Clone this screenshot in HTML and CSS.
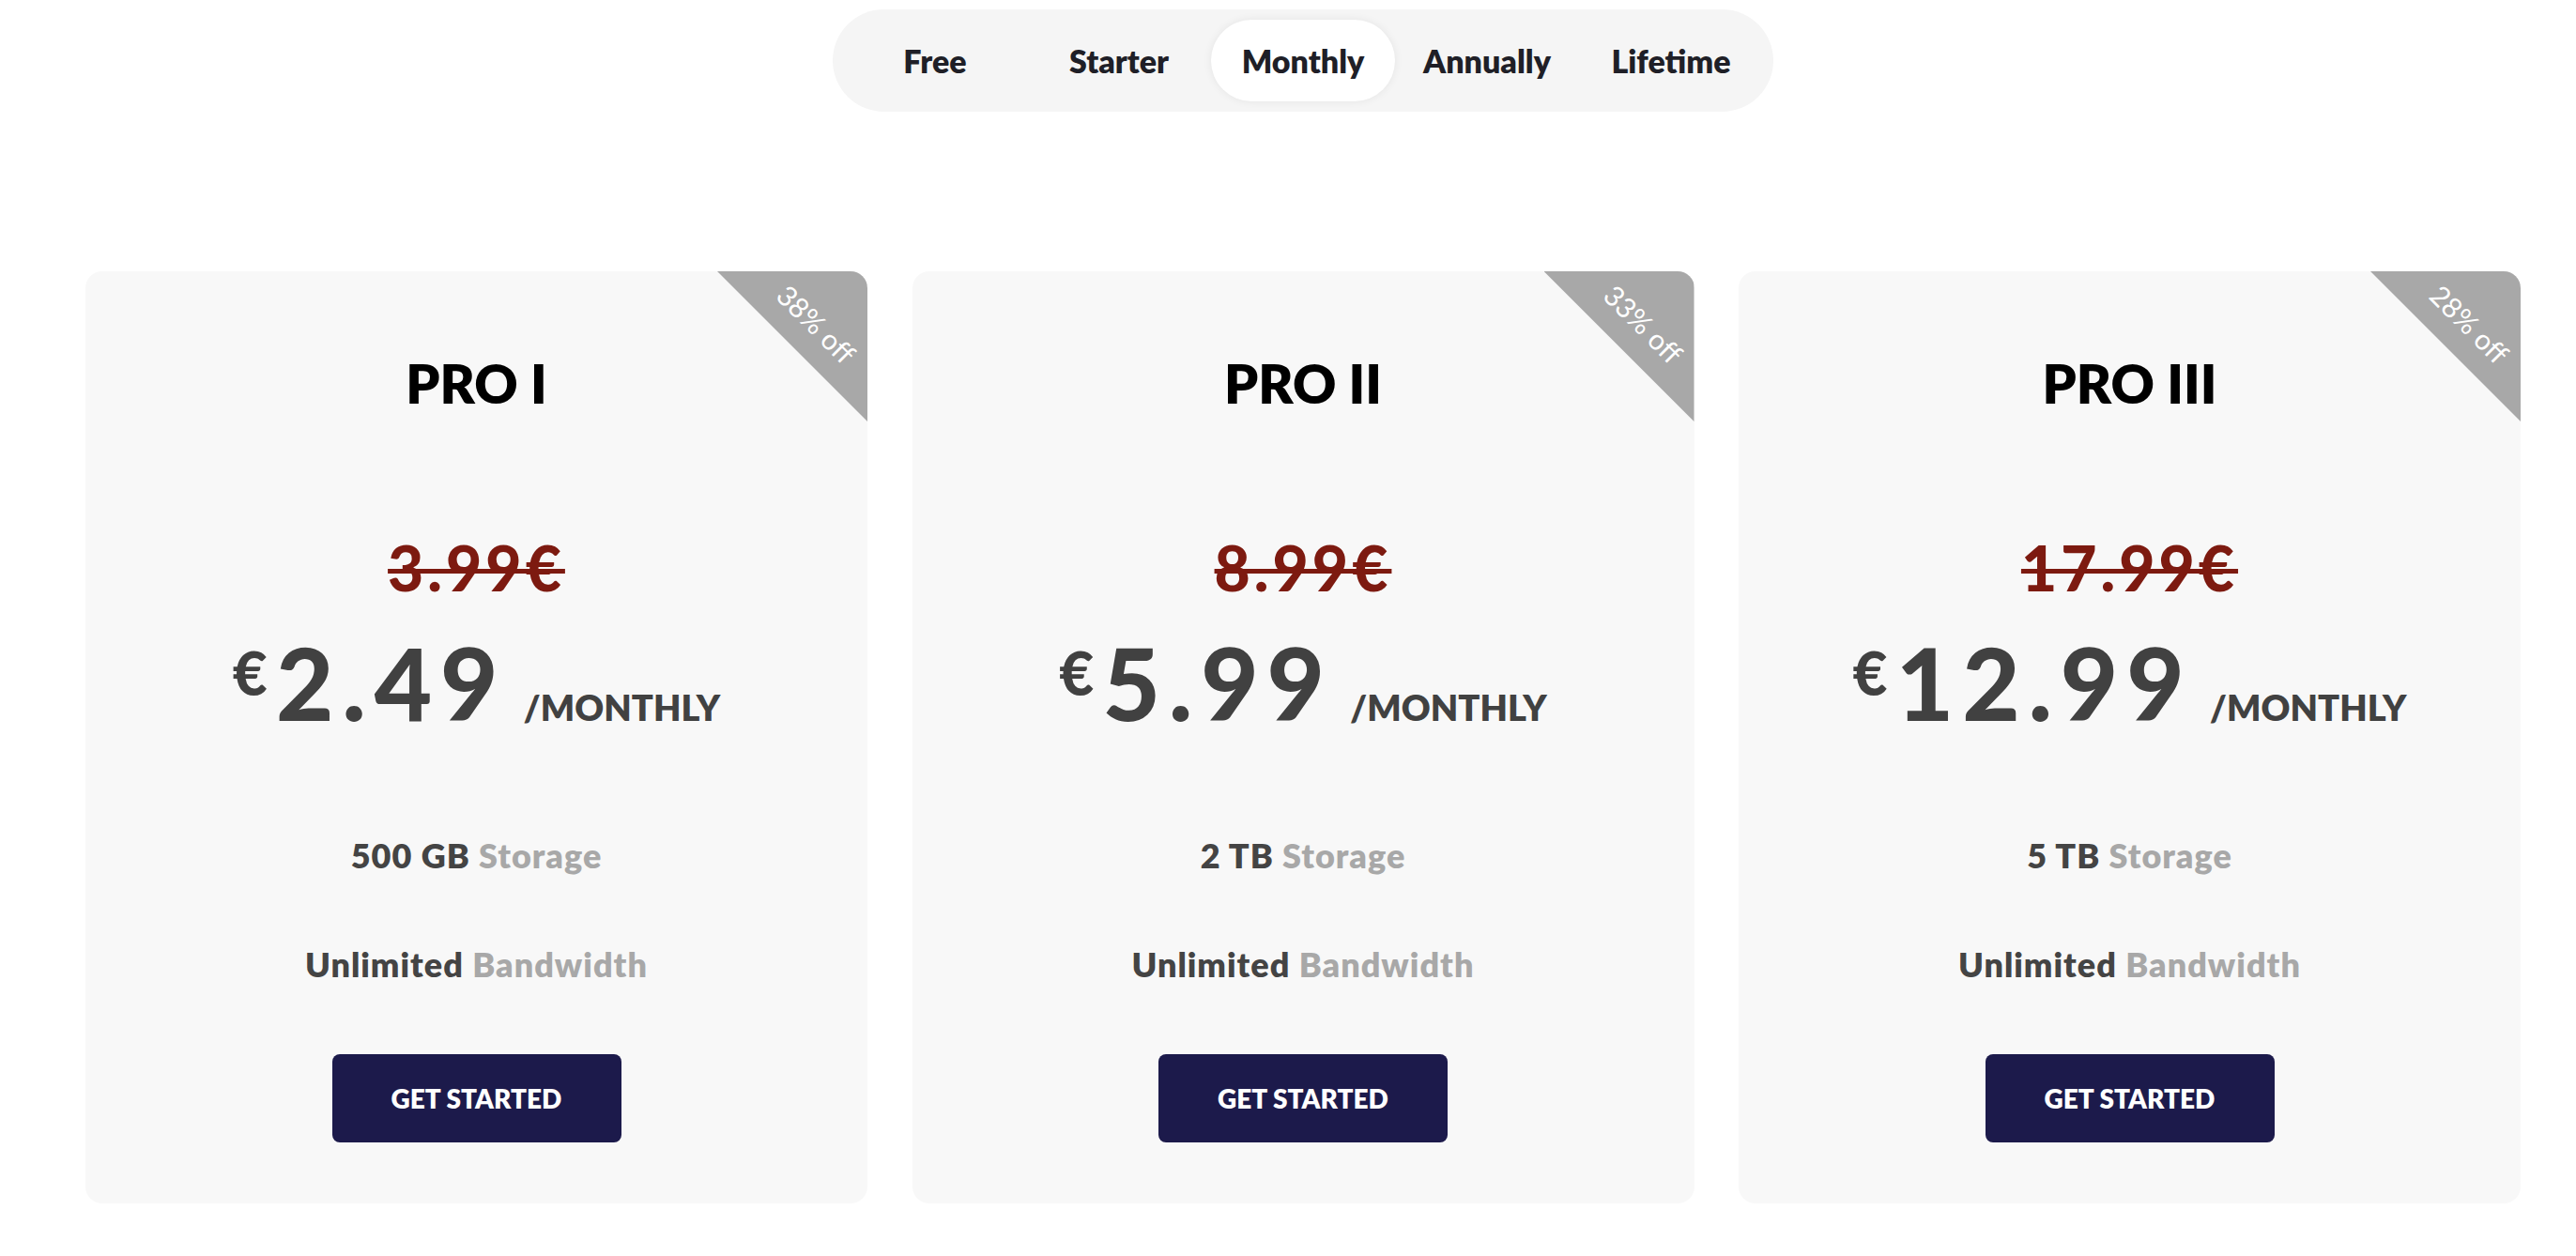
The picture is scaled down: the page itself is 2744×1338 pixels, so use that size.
FILE: index.html
```html
<!DOCTYPE html>
<html lang="en">
<head>
<meta charset="utf-8">
<title>Pricing</title>
<link rel="stylesheet" href="styles.css">
</head>
<body>
<div class="wrap">
  <nav class="tabs">
    <button class="tab">Free</button>
    <button class="tab">Starter</button>
    <button class="tab active">Monthly</button>
    <button class="tab">Annually</button>
    <button class="tab">Lifetime</button>
  </nav>

  <section class="cards">
    <article class="card">
      <div class="ribbon"><span>38% off</span></div>
      <h2 class="title">PRO I</h2>
      <div class="old">3.99€</div>
      <div class="price"><span class="cur">€</span><span class="amount">2.49</span><span class="per">/MONTHLY</span></div>
      <p class="feat first"><b>500 GB</b> <span>Storage</span></p>
      <p class="feat"><b>Unlimited</b> <span>Bandwidth</span></p>
      <a class="btn" href="#">GET STARTED</a>
    </article>

    <article class="card">
      <div class="ribbon"><span>33% off</span></div>
      <h2 class="title">PRO II</h2>
      <div class="old">8.99€</div>
      <div class="price"><span class="cur">€</span><span class="amount">5.99</span><span class="per">/MONTHLY</span></div>
      <p class="feat first"><b>2 TB</b> <span>Storage</span></p>
      <p class="feat"><b>Unlimited</b> <span>Bandwidth</span></p>
      <a class="btn" href="#">GET STARTED</a>
    </article>

    <article class="card">
      <div class="ribbon"><span>28% off</span></div>
      <h2 class="title">PRO III</h2>
      <div class="old">17.99€</div>
      <div class="price"><span class="cur">€</span><span class="amount">12.99</span><span class="per">/MONTHLY</span></div>
      <p class="feat first"><b>5 TB</b> <span>Storage</span></p>
      <p class="feat"><b>Unlimited</b> <span>Bandwidth</span></p>
      <a class="btn" href="#">GET STARTED</a>
    </article>
  </section>
</div>
</body>
</html>
```

FILE: styles.css
```css
* { box-sizing: border-box; }

html, body {
  margin: 0;
  padding: 0;
  background: #ffffff;
  font-family: Lato, "Open Sans", "Liberation Sans", sans-serif;
}

.wrap {
  width: 2594px;
  margin-left: 91px;
  padding-top: 10px;
  display: flex;
  flex-direction: column;
  align-items: center;
}

/* ---- tab switcher ---- */
.tabs {
  display: flex;
  padding: 11px;
  background: #f5f5f5;
  border-radius: 60px;
}

.tab {
  width: 196px;
  height: 87px;
  border: 0;
  background: transparent;
  border-radius: 44px;
  font-family: inherit;
  font-weight: 800;
  font-size: 34px;
  color: #1f1f27;
  padding: 0;
  cursor: pointer;
}

.tab.active {
  background: #ffffff;
  box-shadow: 0 0 10px rgba(0, 0, 0, 0.07);
}

/* ---- cards ---- */
.cards {
  margin-top: 170px;
  width: 100%;
  display: grid;
  grid-template-columns: repeat(3, 833px);
  column-gap: 47.5px;
}

.card {
  position: relative;
  overflow: hidden;
  background: #f8f8f8;
  border-radius: 18px;
  padding: 91px 0 65px;
  display: flex;
  flex-direction: column;
  align-items: center;
}

.ribbon {
  position: absolute;
  top: 0;
  right: 0;
  width: 160px;
  height: 160px;
  background: #a8a8a8;
  clip-path: polygon(0 0, 100% 0, 100% 100%);
}

.ribbon span {
  position: absolute;
  left: 106px;
  top: 56px;
  transform: translate(-50%, -50%) rotate(45deg);
  white-space: nowrap;
  color: #ffffff;
  font-size: 30px;
  font-weight: 400;
}

.title {
  margin: 0;
  font-size: 57px;
  line-height: 1;
  font-weight: 800;
  color: #000000;
}

.old {
  margin-top: 135px;
  font-size: 66px;
  line-height: 1;
  font-weight: 900;
  color: #7d1a10;
  letter-spacing: 4px;
  text-decoration: line-through;
  text-decoration-thickness: 5px;
}

.price {
  margin-top: 36px;
  display: flex;
  align-items: baseline;
  color: #414141;
  font-weight: 900;
}

.cur {
  align-self: flex-start;
  font-size: 64px;
  line-height: 1;
  margin-top: 11px;
  margin-right: 9px;
}

.amount {
  font-size: 106px;
  line-height: 1;
  letter-spacing: 9px;
}

.per {
  font-size: 38px;
  line-height: 1;
  font-weight: 800;
  margin-left: 18px;
}

.feat {
  margin: 80px 0 0;
  font-size: 36px;
  line-height: 1;
  font-weight: 800;
  letter-spacing: 1px;
}

.feat.first {
  margin-top: 113px;
}

.feat b { color: #444444; font-weight: 800; }
.feat span { color: #a8a8a8; }

.btn {
  margin-top: 78px;
  width: 308px;
  height: 94px;
  border-radius: 8px;
  background: #1c1a4b;
  color: #ffffff;
  font-size: 28px;
  font-weight: 800;
  text-decoration: none;
  display: flex;
  align-items: center;
  justify-content: center;
}
```
